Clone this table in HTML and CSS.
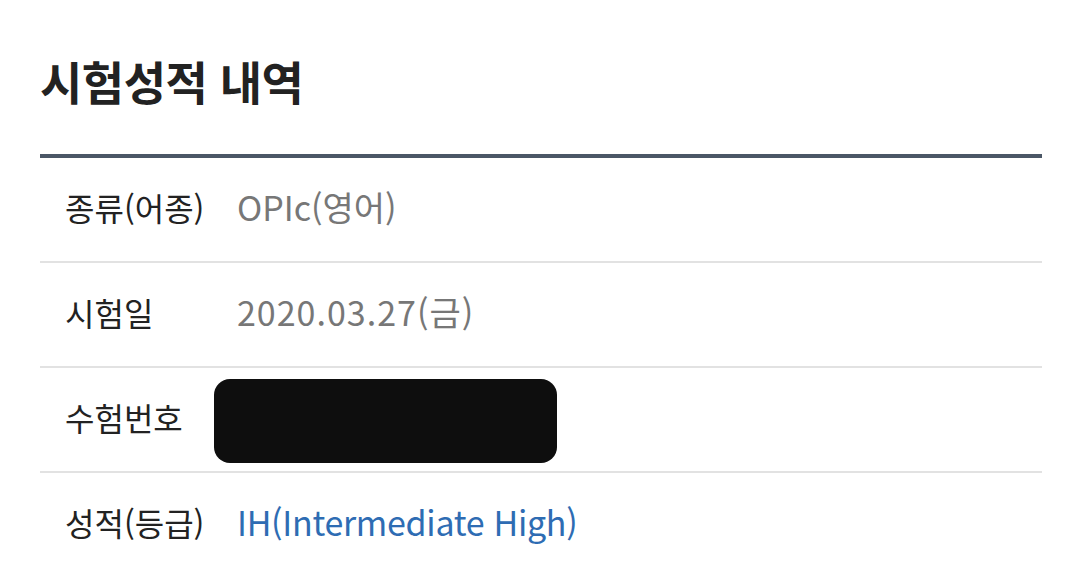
FILE: index.html
```html
<!DOCTYPE html>
<html lang="ko">
<head>
<meta charset="utf-8">
<link rel="stylesheet" href="styles.css">
</head>
<body>
<main class="page">
  <h1 class="title">시험성적 내역</h1>
  <dl class="table">
    <div class="row">
      <dt class="label">종류(어종)</dt>
      <dd class="value">OPIc(영어)</dd>
    </div>
    <div class="row">
      <dt class="label">시험일</dt>
      <dd class="value date">2020.03.27(금)</dd>
    </div>
    <div class="row">
      <dt class="label">수험번호</dt>
      <dd class="value"><span class="redact"></span></dd>
    </div>
    <div class="row">
      <dt class="label">성적(등급)</dt>
      <dd class="value grade">IH(Intermediate High)</dd>
    </div>
  </dl>
</main>
</body>
</html>
```

FILE: styles.css
```css
html, body {
  margin: 0;
  padding: 0;
  background: #ffffff;
}
body {
  font-family: "Noto Sans CJK KR", "Noto Sans", sans-serif;
  color: #222222;
  overflow: hidden;
}
.page {
  padding: 0 38px 0 40px;
}
.title {
  margin: 0;
  padding: 50px 0 44px;
  font-size: 46px;
  font-weight: 700;
  line-height: 60px;
  letter-spacing: -0.5px;
  color: #222222;
}
.table {
  margin: 0;
  border-top: 4px solid #4b5766;
}
.row {
  display: flex;
  align-items: center;
  height: 103px;
  padding-bottom: 6px;
  box-sizing: content-box;
  height: 97px;
  border-bottom: 2px solid #e2e2e2;
}
.label {
  width: 197px;
  padding-left: 25px;
  box-sizing: border-box;
  font-size: 32px;
  color: #222222;
}
.value {
  margin: 0;
  font-size: 34px;
  color: #777777;
}
.date {
  letter-spacing: 1px;
}
.grade {
  color: #2e6cb3;
  letter-spacing: -0.3px;
}
.redact {
  display: block;
  width: 343px;
  height: 84px;
  margin: 8px 0 0 -23px;
  background: #0e0e0e;
  border-radius: 16px;
}
```
